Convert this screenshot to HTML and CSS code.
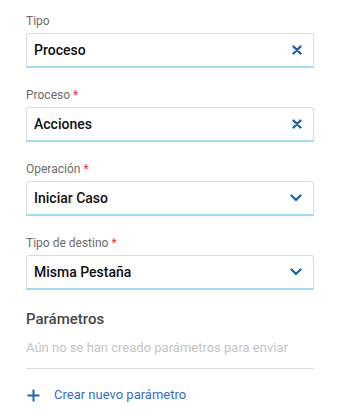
FILE: index.html
```html
<!DOCTYPE html>
<html lang="es">
<head>
<meta charset="utf-8">
<link rel="stylesheet" href="styles.css">
</head>
<body>
<div class="form">
  <div class="field">
    <div class="label">Tipo</div>
    <div class="box">
      <span class="value">Proceso</span>
      <svg class="icon" width="10" height="10" viewBox="0 0 10 10"><path d="M1.5 1.5L8.5 8.5M8.5 1.5L1.5 8.5" stroke="#1a64a6" stroke-width="2.4" stroke-linecap="round"/></svg>
    </div>
  </div>
  <div class="field">
    <div class="label">Proceso<span class="req">*</span></div>
    <div class="box">
      <span class="value">Acciones</span>
      <svg class="icon" width="10" height="10" viewBox="0 0 10 10"><path d="M1.5 1.5L8.5 8.5M8.5 1.5L1.5 8.5" stroke="#1a64a6" stroke-width="2.4" stroke-linecap="round"/></svg>
    </div>
  </div>
  <div class="field">
    <div class="label">Operación<span class="req">*</span></div>
    <div class="box">
      <span class="value">Iniciar Caso</span>
      <svg class="icon" width="12" height="8" viewBox="0 0 12 8"><path d="M1.5 1.5L6 6L10.5 1.5" fill="none" stroke="#1a64a6" stroke-width="2.2" stroke-linecap="round" stroke-linejoin="round"/></svg>
    </div>
  </div>
  <div class="field">
    <div class="label">Tipo de destino<span class="req">*</span></div>
    <div class="box">
      <span class="value">Misma Pestaña</span>
      <svg class="icon" width="12" height="8" viewBox="0 0 12 8"><path d="M1.5 1.5L6 6L10.5 1.5" fill="none" stroke="#1a64a6" stroke-width="2.2" stroke-linecap="round" stroke-linejoin="round"/></svg>
    </div>
  </div>
  <div class="params">
    <div class="params-title">Parámetros</div>
    <div class="params-empty">Aún no se han creado parámetros para enviar</div>
  </div>
  <div class="create">
    <svg class="plus" width="13" height="13" viewBox="0 0 13 13"><path d="M6.5 0.5V12.5M0.5 6.5H12.5" stroke="#1c64b4" stroke-width="2"/></svg>
    <span>Crear nuevo parámetro</span>
  </div>
</div>
</body>
</html>
```
FILE: styles.css
```css
* { box-sizing: border-box; }
html, body { margin: 0; padding: 0; background: #fff; }
body { font-family: Roboto, "Noto Sans", sans-serif; }
.form {
  width: 338px;
  padding: 13px 24px 0 26px;
  display: flex;
  flex-direction: column;
}
.field {
  display: flex;
  flex-direction: column;
  gap: 4px;
  margin-bottom: 19px;
}
.label {
  font-size: 12px;
  line-height: 16px;
  color: #6b6b6b;
}
.req {
  color: #e8344a;
  margin-left: 3px;
}
.box {
  height: 35px;
  border: 1px solid #dcdcdc;
  border-bottom: 2px solid #9fdcf2;
  border-radius: 3px 3px 0 0;
  display: flex;
  align-items: center;
  justify-content: space-between;
  padding: 0 11px 0 7px;
}
.value {
  font-size: 14px;
  font-weight: 500;
  color: #111;
}
.icon { display: block; }
.params {
  padding-top: 0;
  border-bottom: 1px solid #dadada;
  padding-bottom: 11px;
}
.params-title {
  font-size: 15px;
  line-height: 20px;
  font-weight: 500;
  color: #474747;
  margin-bottom: 10px;
}
.params-empty {
  font-size: 13px;
  line-height: 18px;
  color: #c4c4c4;
}
.create {
  display: flex;
  align-items: center;
  gap: 14px;
  margin-top: 17px;
  padding-left: 1px;
  font-size: 13px;
  line-height: 18px;
  color: #356fbf;
}
.plus { display: block; }
```
